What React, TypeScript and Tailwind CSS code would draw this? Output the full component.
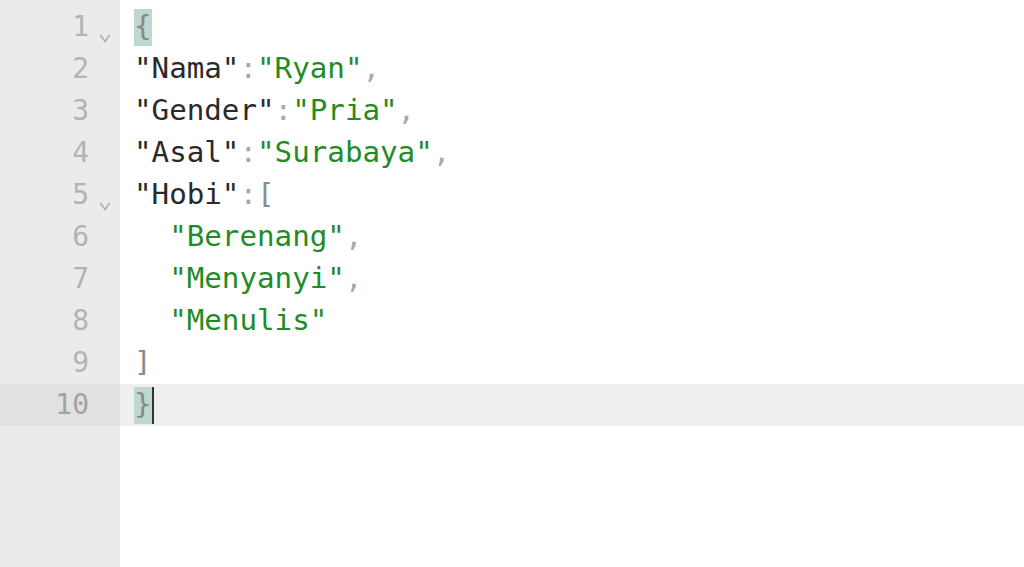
import React from "react";

type Tok = { t: string; c: string };

const K = "text-[#2a2a2a]";
const S = "text-[#1f8c25]";
const P = "text-[#a8a8a8]";
const B = "text-[#8a8a8a]";

const lines: { indent: number; toks: Tok[]; fold?: boolean }[] = [
  { indent: 0, toks: [{ t: "{", c: B }], fold: true },
  { indent: 0, toks: [{ t: '"Nama"', c: K }, { t: ":", c: P }, { t: '"Ryan"', c: S }, { t: ",", c: P }] },
  { indent: 0, toks: [{ t: '"Gender"', c: K }, { t: ":", c: P }, { t: '"Pria"', c: S }, { t: ",", c: P }] },
  { indent: 0, toks: [{ t: '"Asal"', c: K }, { t: ":", c: P }, { t: '"Surabaya"', c: S }, { t: ",", c: P }] },
  { indent: 0, toks: [{ t: '"Hobi"', c: K }, { t: ":", c: P }, { t: "[", c: B }], fold: true },
  { indent: 2, toks: [{ t: '"Berenang"', c: S }, { t: ",", c: P }] },
  { indent: 2, toks: [{ t: '"Menyanyi"', c: S }, { t: ",", c: P }] },
  { indent: 2, toks: [{ t: '"Menulis"', c: S }] },
  { indent: 0, toks: [{ t: "]", c: B }] },
  { indent: 0, toks: [{ t: "}", c: B }] },
];

function Chevron() {
  return (
    <svg width="12" height="10" viewBox="0 0 12 10" className="mt-[27px]">
      <path d="M1.5 2 L6 8.5 L10.5 2" fill="none" stroke="#a9a9a9" strokeWidth="1.4" />
    </svg>
  );
}

export default function App() {
  const font = { fontFamily: '"DejaVu Sans Mono", "Liberation Mono", monospace' };
  return (
    <div className="w-[1024px] h-[567px] overflow-hidden bg-white flex" style={font}>
      <div className="w-[120px] shrink-0 bg-[#ebebeb] pt-[6px] h-full">
        {lines.map((l, i) => (
          <div
            key={i}
            className={`h-[42px] flex items-center ${i === 9 ? "bg-[#e1e1e1]" : ""}`}
          >
            <div
              className={`w-[89px] text-right text-[28px] leading-none ${i === 9 ? "text-[#a3a3a3]" : "text-[#b3b3b3]"}`}
            >
              {i + 1}
            </div>
            <div className="w-[31px] flex justify-start pl-[10px] self-start h-full">
              {l.fold ? <Chevron /> : null}
            </div>
          </div>
        ))}
      </div>
      <div className="flex-1 pt-[6px]">
        {lines.map((l, i) => (
          <div
            key={i}
            className={`h-[42px] flex items-center pl-[14px] text-[29.2px] leading-none whitespace-pre ${i === 9 ? "bg-[#f0eff0]" : ""}`}
          >
            <span>{" ".repeat(l.indent)}</span>
            {l.toks.map((tk, j) => {
              const hl = (i === 0 && j === 0) || (i === 9 && j === 0);
              return (
                <span
                  key={j}
                  className={`${tk.c} ${hl ? "bg-[#bcd8cf] h-[37px] flex items-center" : ""}`}
                >
                  {tk.t}
                </span>
              );
            })}
            {i === 9 ? <span className="w-[2px] h-[37px] bg-[#333333]" /> : null}
          </div>
        ))}
      </div>
    </div>
  );
}
